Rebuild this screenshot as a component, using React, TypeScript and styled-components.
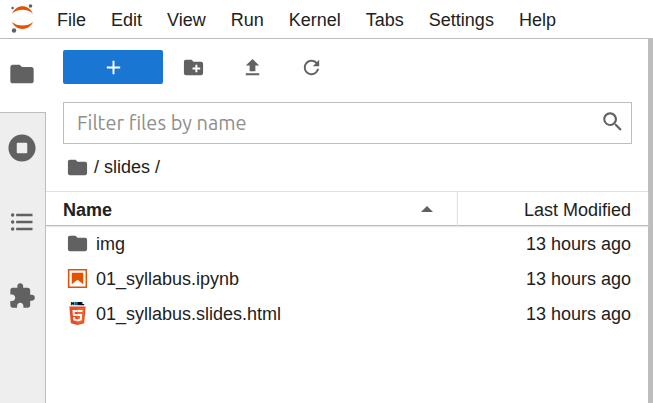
import React from "react";
import styled, { createGlobalStyle, css } from "styled-components";

const GlobalStyle = createGlobalStyle`
  *, *::before, *::after { box-sizing: border-box; }
  body {
    margin: 0;
    background: #fff;
    color: #212121;
    font-family: "Liberation Sans", Arial, sans-serif;
    font-size: 18px;
    line-height: 24px;
  }
  button, input { font: inherit; color: inherit; margin: 0; }
`;

const resetButton = css`
  border: 0;
  padding: 0;
  background: none;
  cursor: pointer;
`;

const Shell = styled.div`
  display: flex;
  flex-direction: column;
  min-height: 100vh;
`;

const MenuBar = styled.header`
  display: flex;
  align-items: center;
  height: 39px;
  border-bottom: 1px solid #bdbdbd;
`;

const Logo = styled.svg`
  width: 45px;
  height: 38px;
  flex: none;
`;

const Menus = styled.nav`
  display: flex;
  gap: 1px;
  padding-top: 2px;
`;

const MenuButton = styled.button`
  ${resetButton}
  padding: 0 12px;
`;

const Body = styled.div`
  display: flex;
  flex: 1;
`;

const SideBar = styled.nav`
  display: flex;
  flex-direction: column;
  flex: none;
  width: 46px;
`;

const InactiveTabs = styled.div`
  display: flex;
  flex-direction: column;
  gap: 1px;
  flex: 1;
  background: #eee;
  border-top: 1px solid #bdbdbd;
  border-right: 1px solid #bdbdbd;
`;

const SideTab = styled.button`
  ${resetButton}
  display: flex;
  align-items: center;
  justify-content: center;
  width: 44px;
  height: 73px;
  padding-bottom: 3px;
`;

const Glyph = styled.svg<{ $size: number }>`
  display: block;
  flex: none;
  width: ${(p) => p.$size}px;
  height: ${(p) => p.$size}px;
  fill: #616161;
`;

const Panel = styled.main`
  flex: 1;
  min-width: 0;
  border-right: 5px solid #bdbdbd;
`;

const Toolbar = styled.div`
  display: flex;
  align-items: center;
  padding: 11px 17px 0;
`;

const NewButton = styled.button`
  ${resetButton}
  display: flex;
  align-items: center;
  justify-content: center;
  width: 100px;
  height: 34px;
  padding-top: 1px;
  margin-right: 1px;
  border-radius: 2px;
  background: #1976d2;
  svg { fill: #fff; }
`;

const ToolButton = styled.button`
  ${resetButton}
  display: flex;
  align-items: center;
  justify-content: center;
  width: 59px;
  height: 34px;
  padding-top: 1px;
`;

const FilterBox = styled.label`
  display: flex;
  align-items: center;
  height: 42px;
  margin: 18px 16px 0 17px;
  padding: 0 7px 4px 13px;
  border: 1px solid #bdbdbd;
`;

const FilterInput = styled.input`
  flex: 1;
  min-width: 0;
  height: 34px;
  border: 0;
  padding: 3px 0 0;
  outline: 0;
  background: none;
  font-family: Ubuntu, "Noto Sans", sans-serif;
  font-size: 20px;
  &::placeholder { color: #8e8e8e; opacity: 1; }
`;

const Crumbs = styled.nav`
  display: flex;
  align-items: center;
  gap: 5px;
  padding: 11px 20px 12px;
  a { display: block; color: inherit; text-decoration: none; }
`;

const Files = styled.table`
  width: 100%;
  table-layout: fixed;
  border-collapse: separate;
  border-spacing: 0;
`;

const HeadCell = styled.th<{ $modified?: boolean }>`
  height: 35px;
  padding: 2px 17px 0;
  border-top: 1px solid #e0e0e0;
  border-bottom: 1px solid #bdbdbd;
  box-shadow: 0 1px 1px #e8e8e8;
  text-align: left;
  ${(p) =>
    p.$modified &&
    css`
      width: 191px;
      border-left: 1px solid #e0e0e0;
      text-align: right;
      font-weight: 400;
    `}
`;

const SortButton = styled.button`
  ${resetButton}
  display: flex;
  align-items: center;
  justify-content: space-between;
  width: 100%;
  padding-right: 2px;
  font-weight: 700;
`;

const HeadButton = styled.button`
  ${resetButton}
`;

const Caret = styled.svg`
  width: 22px;
  height: 22px;
  fill: #616161;
`;

const Cell = styled.td<{ $modified?: boolean }>`
  height: 35px;
  padding: 0 17px 0 20px;
  text-align: ${(p) => (p.$modified ? "right" : "left")};
  white-space: nowrap;
`;

const FileName = styled.div`
  display: flex;
  align-items: center;
  gap: 7px;
`;

const paths = {
  folder:
    "M10 4H4c-1.1 0-1.99.9-1.99 2L2 18c0 1.1.9 2 2 2h16c1.1 0 2-.9 2-2V8c0-1.1-.9-2-2-2h-8l-2-2z",
  newFolder:
    "M20 6h-8l-2-2H4c-1.11 0-1.99.89-1.99 2L2 18c0 1.11.89 2 2 2h16c1.11 0 2-.89 2-2V8c0-1.11-.89-2-2-2zm-1 8h-3v3h-2v-3h-3v-2h3V9h2v3h3v2z",
  upload: "M5 20h14v-2H5v2zm0-4zM9 16h6v-6h4l-7-7-7 7h4z",
  refresh:
    "M9 13.5c-2.49 0-4.5-2.01-4.5-4.5S6.51 4.5 9 4.5c1.24 0 2.36.52 3.17 1.33L10 8h5V3l-1.76 1.76C12.15 3.68 10.66 3 9 3 5.69 3 3.01 5.69 3.01 9S5.69 15 9 15c2.97 0 5.43-2.16 5.9-5h-1.52c-.46 2-2.24 3.5-4.38 3.5z",
  add: "M19 13h-6v6h-2v-6H5v-2h6V5h2v6h6v2z",
  search:
    "M12.1,10.9h-0.7l-0.2-0.2c0.8-0.9,1.3-2.2,1.3-3.5c0-3-2.4-5.4-5.4-5.4S1.8,4.2,1.8,7.1s2.4,5.4,5.4,5.4c1.3,0,2.5-0.5,3.5-1.3l0.2,0.2v0.7l4.1,4.1l1.2-1.2L12.1,10.9z M7.1,10.9c-2.1,0-3.7-1.7-3.7-3.7s1.7-3.7,3.7-3.7s3.7,1.7,3.7,3.7S9.2,10.9,7.1,10.9z",
  running:
    "M256 8C119 8 8 119 8 256s111 248 248 248 248-111 248-248S393 8 256 8zm96 328c0 8.8-7.2 16-16 16H176c-8.8 0-16-7.2-16-16V176c0-8.8 7.2-16 16-16h160c8.8 0 16 7.2 16 16v160z",
  contents:
    "M7,5H21V7H7V5M7,13V11H21V13H7M4,4.5A1.5,1.5 0 0,1 5.5,6A1.5,1.5 0 0,1 4,7.5A1.5,1.5 0 0,1 2.5,6A1.5,1.5 0 0,1 4,4.5M4,10.5A1.5,1.5 0 0,1 5.5,12A1.5,1.5 0 0,1 4,13.5A1.5,1.5 0 0,1 2.5,12A1.5,1.5 0 0,1 4,10.5M7,19V17H21V19H7M4,16.5A1.5,1.5 0 0,1 5.5,18A1.5,1.5 0 0,1 4,19.5A1.5,1.5 0 0,1 2.5,18A1.5,1.5 0 0,1 4,16.5Z",
  extension:
    "M20.5 11H19V7c0-1.1-.9-2-2-2h-4V3.5C13 2.12 11.88 1 10.5 1S8 2.12 8 3.5V5H4c-1.1 0-1.99.9-1.99 2v3.8H3.5c1.49 0 2.7 1.21 2.7 2.7s-1.21 2.7-2.7 2.7H2V20c0 1.1.9 2 2 2h3.8v-1.5c0-1.49 1.21-2.7 2.7-2.7 1.49 0 2.7 1.21 2.7 2.7V22H17c1.1 0 2-.9 2-2v-4h1.5c1.38 0 2.5-1.12 2.5-2.5S21.88 11 20.5 11z",
};

type IconName = keyof typeof paths;

function Icon({ name, size = 23, box = 24 }: { name: IconName; size?: number; box?: number }) {
  return (
    <Glyph $size={size} viewBox={`0 0 ${box} ${box}`} aria-hidden="true">
      <path d={paths[name]} />
    </Glyph>
  );
}

function NotebookIcon() {
  return (
    <Glyph $size={23} viewBox="0 0 22 22" aria-hidden="true">
      <g fill="#e65100">
        <path d="M18.7 3.3v15.4H3.3V3.3h15.4m1.5-1.5H1.8v18.3h18.3l.1-18.3z" />
        <path d="M16.5 16.5l-5.4-4.3-5.6 4.3v-11h11z" />
      </g>
    </Glyph>
  );
}

function HtmlIcon() {
  return (
    <Glyph $size={23} viewBox="0 0 512 512" aria-hidden="true">
      <text
        x="256"
        y="70"
        textAnchor="middle"
        fontFamily="Liberation Sans, sans-serif"
        fontWeight="700"
        fontSize="104"
        fill="#000"
        stroke="#000"
        strokeWidth="12"
      >
        HTML
      </text>
      <path fill="#e44d26" d="M107.6 471l-33-370.4h362.8l-33 370.2L255.7 512" />
      <path fill="#f16529" d="M256 480.5V131h148.3L376 447" />
      <path
        fill="#ebebeb"
        d="M142 176.3h114v45.4h-64.2l4.2 46.5h60v45.3H154.4M156.4 336.3H202l3.2 36.3 50.8 13.6v47.4l-93.2-26"
      />
      <path
        fill="#fff"
        d="M369.6 176.3H255.8v45.4h109.6M361.3 268.2H255.8v45.4h56l-5.3 59-50.7 13.6v47.2l93-25.8"
      />
    </Glyph>
  );
}

const menus = ["File", "Edit", "View", "Run", "Kernel", "Tabs", "Settings", "Help"];

const files = [
  { name: "img", icon: <Icon name="folder" />, modified: "13 hours ago" },
  { name: "01_syllabus.ipynb", icon: <NotebookIcon />, modified: "13 hours ago" },
  { name: "01_syllabus.slides.html", icon: <HtmlIcon />, modified: "13 hours ago" },
];

export default function App() {
  return (
    <Shell>
      <GlobalStyle />
      <MenuBar>
        <Logo viewBox="0 0 45 38" aria-label="Jupyter" role="img">
          <path fill="#e65100" d="M12 14C16 3.700 29 3.700 33 14C28 8.400 17 8.400 12 14z" />
          <path fill="#e65100" d="M12 22C16 31.300 29 31.300 33 22C28 26.800 17 26.800 12 22z" />
          <g fill="#616161">
            <circle cx="12.600" cy="8" r="1.300" />
            <circle cx="30.500" cy="6" r="1.800" />
            <circle cx="14" cy="30.500" r="2.200" />
          </g>
        </Logo>
        <Menus aria-label="Main menu">
          {menus.map((m) => (
            <MenuButton key={m}>{m}</MenuButton>
          ))}
        </Menus>
      </MenuBar>
      <Body>
        <SideBar aria-label="Side bar">
          <SideTab aria-label="File Browser">
            <Icon name="folder" size={28} />
          </SideTab>
          <InactiveTabs>
            <SideTab aria-label="Running Terminals and Kernels">
              <Icon name="running" size={28} box={512} />
            </SideTab>
            <SideTab aria-label="Table of Contents">
              <Icon name="contents" size={28} />
            </SideTab>
            <SideTab aria-label="Extension Manager">
              <Icon name="extension" size={28} />
            </SideTab>
          </InactiveTabs>
        </SideBar>
        <Panel>
          <Toolbar>
            <NewButton aria-label="New Launcher">
              <Icon name="add" />
            </NewButton>
            <ToolButton aria-label="New Folder">
              <Icon name="newFolder" />
            </ToolButton>
            <ToolButton aria-label="Upload Files">
              <Icon name="upload" />
            </ToolButton>
            <ToolButton aria-label="Refresh File List">
              <Icon name="refresh" box={18} />
            </ToolButton>
          </Toolbar>
          <FilterBox>
            <FilterInput type="text" placeholder="Filter files by name" aria-label="Filter files by name" />
            <Icon name="search" box={18} />
          </FilterBox>
          <Crumbs aria-label="Current folder">
            <a href="#root" aria-label="Root folder">
              <Icon name="folder" />
            </a>
            <span>/</span>
            <a href="#slides">slides</a>
            <span>/</span>
          </Crumbs>
          <Files>
            <thead>
              <tr>
                <HeadCell scope="col" aria-sort="ascending">
                  <SortButton>
                    Name
                    <Caret viewBox="0 0 22 22" aria-hidden="true">
                      <path d="M5 13l6-6 6 6z" />
                    </Caret>
                  </SortButton>
                </HeadCell>
                <HeadCell scope="col" $modified>
                  <HeadButton>Last Modified</HeadButton>
                </HeadCell>
              </tr>
            </thead>
            <tbody>
              {files.map((f) => (
                <tr key={f.name}>
                  <Cell>
                    <FileName>
                      {f.icon}
                      {f.name}
                    </FileName>
                  </Cell>
                  <Cell $modified>{f.modified}</Cell>
                </tr>
              ))}
            </tbody>
          </Files>
        </Panel>
      </Body>
    </Shell>
  );
}
